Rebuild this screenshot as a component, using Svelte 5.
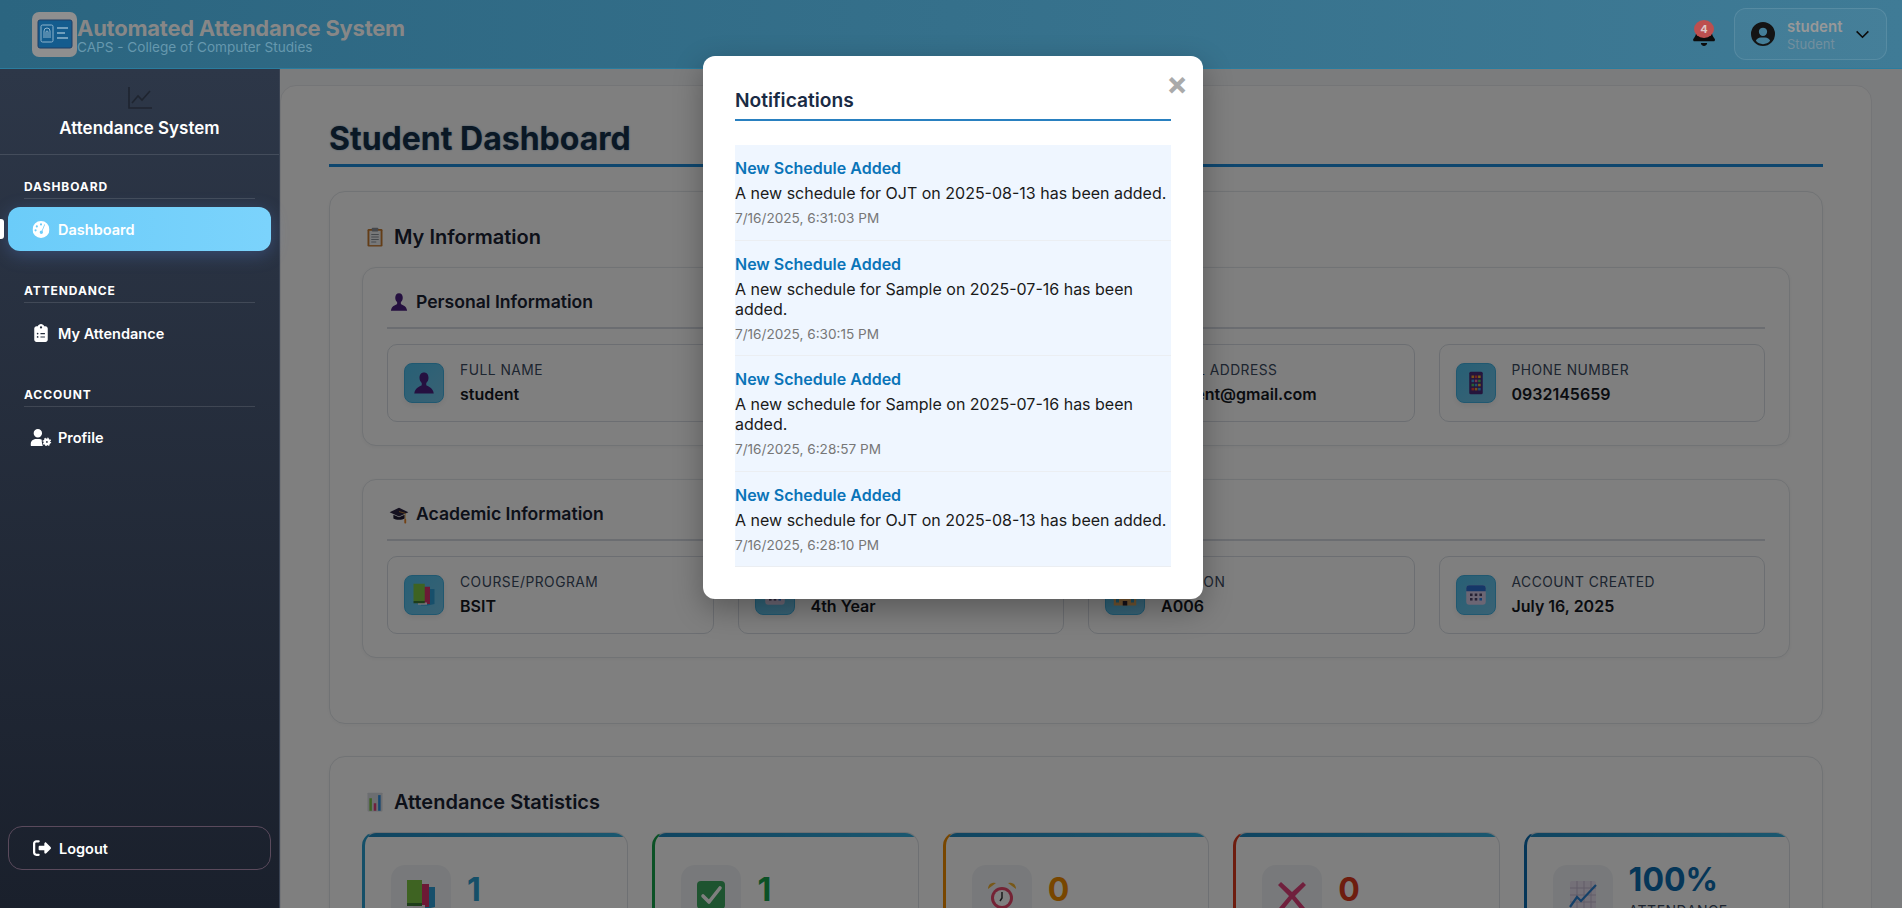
<script>
  let personal = [
    { icon: "bust", label: "Full Name", value: "student" },
    { icon: "id", label: "Student ID", value: "2022-0001" },
    { icon: "mail", label: "Email Address", value: "student@gmail.com" },
    { icon: "phone", label: "Phone Number", value: "0932145659" },
  ];
  let academic = [
    { icon: "books", label: "Course/Program", value: "BSIT" },
    { icon: "tear", label: "Year Level", value: "4th Year" },
    { icon: "school", label: "Section", value: "A006" },
    { icon: "cal", label: "Account Created", value: "July 16, 2025" },
  ];
  let stats = [
    { icon: "books", value: "1", label: "Total Classes", color: "#2a9fd0" },
    { icon: "check", value: "1", label: "Present", color: "#16a34a" },
    { icon: "clock", value: "0", label: "Late", color: "#f08c00" },
    { icon: "cross", value: "0", label: "Absent", color: "#dc3a1e" },
    { icon: "chart", value: "100%", label: "Attendance Rate", color: "#0a6cb0" },
  ];
  let notes = [
    { text: "A new schedule for OJT on 2025-08-13 has been added.", time: "7/16/2025, 6:31:03 PM" },
    { text: "A new schedule for Sample on 2025-07-16 has been added.", time: "7/16/2025, 6:30:15 PM" },
    { text: "A new schedule for Sample on 2025-07-16 has been added.", time: "7/16/2025, 6:28:57 PM" },
    { text: "A new schedule for OJT on 2025-08-13 has been added.", time: "7/16/2025, 6:28:10 PM" },
  ];
</script>

{#snippet emoji(name)}
  <svg class="emoji" viewBox="0 0 32 32" aria-hidden="true">
    {#if name === "clip"}
      <rect x="4" y="3" width="24" height="28" rx="2" fill="#c77a2e" />
      <rect x="7" y="6" width="18" height="23" fill="#eef0f2" />
      <rect x="11" y="1" width="10" height="6" rx="1" fill="#8a8f96" />
      <path d="M10 12h12M10 16h12M10 20h12M10 24h8" stroke="#8b929b" stroke-width="1.6" />
    {:else if name === "bust"}
      <path d="M16 2c4 0 6 3 6 7 0 3-1 5-3 7v3c3 2 9 3 10 11H3c1-8 7-9 10-11v-3c-2-2-3-4-3-7 0-4 2-7 6-7z" fill="#4a2080" />
    {:else if name === "cap"}
      <path d="M16 6 31 13 16 20 1 13z" fill="#2a2340" />
      <path d="M7 17v6c4 3 14 3 18 0v-6l-9 4z" fill="#1d1830" />
      <path d="M16 12 26 15v10" stroke="#e8a33a" stroke-width="1.2" fill="none" />
      <rect x="24.5" y="24" width="3" height="7" rx="1" fill="#e8852a" />
    {:else if name === "phone"}
      <rect x="7" y="1" width="18" height="30" rx="2" fill="#4a2a78" />
      <rect x="10" y="6" width="3.4" height="3.4" fill="#f0a030" />
      <rect x="14.4" y="6" width="3.4" height="3.4" fill="#e8483a" />
      <rect x="18.8" y="6" width="3.4" height="3.4" fill="#f0c030" />
      <rect x="10" y="11.5" width="3.4" height="3.4" fill="#40a0e0" />
      <rect x="14.4" y="11.5" width="3.4" height="3.4" fill="#e870a0" />
      <rect x="18.8" y="11.5" width="3.4" height="3.4" fill="#50c060" />
      <rect x="10" y="17" width="3.4" height="3.4" fill="#50c060" />
      <rect x="14.4" y="17" width="3.4" height="3.4" fill="#40a0e0" />
      <rect x="18.8" y="17" width="3.4" height="3.4" fill="#f0c030" />
      <rect x="10" y="22.5" width="3.4" height="3.4" fill="#e8483a" />
      <rect x="14.4" y="22.5" width="3.4" height="3.4" fill="#f0a030" />
      <rect x="18.8" y="22.5" width="3.4" height="3.4" fill="#40a0e0" />
    {:else if name === "books"}
      <path d="M12 8h18v20l-9 2h-9z" fill="#2f9fd6" />
      <rect x="10" y="5" width="14" height="23" fill="#d8326a" />
      <rect x="8" y="26" width="12" height="3" fill="#f0e8f0" />
      <rect x="2" y="1" width="15" height="23" fill="#7cc644" />
      <rect x="2" y="24" width="15" height="3" fill="#3d7a34" />
    {:else if name === "tear" || name === "cal"}
      <rect x="3" y="3" width="26" height="26" rx="4" fill="#d8cce8" />
      <path d="M3 11V7a4 4 0 0 1 4-4h18a4 4 0 0 1 4 4v4z" fill={name === "cal" ? "#2a6fd0" : "#b89ad8"} />
      <g fill="#4c4468">
        <rect x="8" y="14" width="3.4" height="3.4" /><rect x="14.3" y="14" width="3.4" height="3.4" /><rect x="20.6" y="14" width="3.4" height="3.4" />
        <rect x="8" y="20" width="3.4" height="3.4" /><rect x="14.3" y="20" width="3.4" height="3.4" />
      </g>
      <rect x="20.6" y="20" width="3.4" height="3.4" fill="#2a7fe0" />
    {:else if name === "school"}
      <rect x="1" y="12" width="30" height="18" fill="#e2a860" />
      <rect x="4" y="20" width="4" height="6" fill="#3a9ac0" />
      <rect x="24" y="20" width="4" height="6" fill="#3a9ac0" />
      <rect x="13" y="24" width="6" height="6" fill="#2a2030" />
      <path d="M2 12 16 5l14 7z" fill="#c0392b" />
    {:else if name === "id" || name === "mail"}
      <rect x="3" y="7" width="26" height="18" rx="2" fill="#e8eef4" />
      <path d="M3 8l13 10L29 8" stroke="#8aa" stroke-width="1.6" fill="none" />
    {:else if name === "check"}
      <rect x="2" y="2" width="28" height="28" rx="4" fill="#3ca860" />
      <path d="M8 17l6 6 11-14" stroke="#fff" stroke-width="3.6" fill="none" stroke-linecap="round" stroke-linejoin="round" />
    {:else if name === "clock"}
      <circle cx="16" cy="19" r="11" fill="#e8466a" />
      <circle cx="16" cy="19" r="8" fill="#fff" />
      <path d="M16 13v6l-2 3" stroke="#333" stroke-width="1.5" fill="none" />
      <path d="M2 10a6 6 0 0 1 8-6zM30 10a6 6 0 0 0-8-6z" fill="#f0b030" />
    {:else if name === "cross"}
      <path d="M5 3 16 13 27 3l3 3-11 11 10 12-4 2-9-11-9 11-4-2 10-12L2 6z" fill="#e0407a" />
    {:else if name === "chart"}
      <rect x="3" y="2" width="26" height="28" rx="2" fill="#e8e0f0" />
      <path d="M3 9h26M3 16h26M3 23h26M10 2v28M17 2v28M24 2v28" stroke="#c4b8d0" stroke-width="1" />
      <path d="M3 28l7-10 4 4L29 6" stroke="#2a80d0" stroke-width="2.2" fill="none" />
    {:else if name === "bars"}
      <rect x="4" y="1" width="24" height="30" rx="1" fill="#d8dce2" />
      <rect x="7" y="10" width="4" height="20" fill="#7cc644" />
      <rect x="14" y="18" width="4" height="12" fill="#e0407a" />
      <rect x="21" y="5" width="4" height="25" fill="#2f8fe0" />
    {/if}
  </svg>
{/snippet}

{#snippet field(item)}
  <div class="field">
    <div class="field-icon">{@render emoji(item.icon)}</div>
    <div>
      <div class="field-label">{item.label}</div>
      <div class="field-value">{item.value}</div>
    </div>
  </div>
{/snippet}

<div class="page">
  <header class="topbar">
    <div class="brand">
      <div class="logo">
        <svg viewBox="0 0 36 30" width="36" height="30" aria-hidden="true">
          <rect x="1" y="1" width="34" height="28" rx="2" fill="#145c8e" stroke="#1f3f66" />
          <rect x="4" y="6" width="12" height="17" rx="1.5" fill="none" stroke="#8fb4cc" stroke-width="1" />
          <path d="M7 19v-7a3 3 0 0 1 6 0v7M9 19v-6a1 1 0 0 1 2 0v6" fill="none" stroke="#8fb4cc" stroke-width="1" />
          <path d="M20 9h11M20 14h8M20 19h11" stroke="#8fb4cc" stroke-width="1.6" />
        </svg>
      </div>
      <div class="brand-text">
        <div class="brand-title">Automated Attendance System</div>
        <div class="brand-sub">CAPS - College of Computer Studies</div>
      </div>
    </div>
    <div class="top-right">
      <div class="bell">
        <svg viewBox="0 0 448 512" width="22" height="25" aria-hidden="true">
          <path fill="#0c0c0c" d="M224 0c-18 0-32 14-32 32v19C119 66 64 131 64 208v19c0 47-17 92-48 127l-7 8c-8 10-10 23-5 35s16 19 29 19h384c13 0 24-8 29-19s3-25-5-35l-7-8c-31-35-48-80-48-127v-19c0-77-55-142-128-157V32c0-18-14-32-32-32zm45 493c12-12 19-28 19-45H160c0 17 7 33 19 45s28 19 45 19 33-7 45-19z" />
        </svg>
        <span class="badge">4</span>
      </div>
      <div class="user">
        <svg viewBox="0 0 512 512" width="24" height="24" aria-hidden="true">
          <path fill="#141414" d="M256 0a256 256 0 1 0 0 512 256 256 0 0 0 0-512zm0 120a88 88 0 1 1 0 176 88 88 0 0 1 0-176zm0 352c-61 0-116-27-153-71 16-45 59-73 105-73h96c46 0 89 28 105 73-37 44-92 71-153 71z" />
        </svg>
        <div class="user-text">
          <div class="user-name">student</div>
          <div class="user-role">Student</div>
        </div>
        <svg viewBox="0 0 16 10" width="15" height="9" aria-hidden="true">
          <path d="M1.5 1.5 8 8l6.5-6.5" fill="none" stroke="#0c0c0c" stroke-width="1.8" />
        </svg>
      </div>
    </div>
  </header>

  <div class="body">
    <aside class="sidebar">
      <div class="side-head">
        <svg viewBox="0 0 24 22" width="24" height="22" aria-hidden="true">
          <path d="M1 0v21h23" fill="none" stroke="#1f2530" stroke-width="1.6" />
          <path d="M4 16l6-7 4 4 8-9" fill="none" stroke="#1f2530" stroke-width="1.6" />
        </svg>
        <div class="side-title">Attendance System</div>
      </div>
      <nav class="side-nav">
        <div class="side-group">
          <div class="side-label">Dashboard</div>
          <div class="side-item active">
            <svg viewBox="0 0 512 512" width="17" height="17" aria-hidden="true">
              <path fill="#fff" fill-rule="evenodd" d="M0 256a256 256 0 1 1 512 0A256 256 0 0 1 0 256zM256 70a32 32 0 1 0 0 64 32 32 0 0 0 0-64zM130 130a32 32 0 1 0 0 64 32 32 0 0 0 0-64zM92 250a32 32 0 1 0 0 64 32 32 0 0 0 0-64zM352 110l-72 180c-30-6-62 16-62 52 0 24 18 50 48 50s50-24 50-50c0-16-6-30-16-40l72-180c8-24-10-30-20-12z" />
            </svg>
            <span>Dashboard</span>
          </div>
        </div>
        <div class="side-group">
          <div class="side-label">Attendance</div>
          <div class="side-item">
            <svg viewBox="0 0 384 512" width="14" height="18" aria-hidden="true">
              <path fill="#fff" fill-rule="evenodd" d="M192 0c-42 0-77 27-91 64H64C29 64 0 93 0 128v320c0 35 29 64 64 64h256c35 0 64-29 64-64V128c0-35-29-64-64-64h-37C269 27 234 0 192 0zm0 64a32 32 0 1 1 0 64 32 32 0 0 1 0-64zM72 272a24 24 0 1 1 48 0 24 24 0 0 1-48 0zm104-16h128v32H176zM72 368a24 24 0 1 1 48 0 24 24 0 0 1-48 0zm104-16h128v32H176z" />
            </svg>
            <span>My Attendance</span>
          </div>
        </div>
        <div class="side-group">
          <div class="side-label">Account</div>
          <div class="side-item">
            <svg viewBox="0 0 640 512" width="21" height="17" aria-hidden="true">
              <path fill="#fff" d="M224 0a128 128 0 1 1 0 256A128 128 0 0 1 224 0zm-45 304h90c28 0 54 8 76 22-8 40 0 90 30 186H30c-17 0-30-13-30-30 0-106 67-178 179-178z" />
              <circle cx="500" cy="390" r="66" fill="none" stroke="#fff" stroke-width="76" />
              <circle cx="500" cy="390" r="116" fill="none" stroke="#fff" stroke-width="34" stroke-dasharray="44 47" />
            </svg>
            <span>Profile</span>
          </div>
        </div>
      </nav>
      <div class="logout">
        <svg viewBox="0 0 512 512" width="18" height="18" aria-hidden="true">
          <path fill="#fff" d="M160 96c18 0 32-14 32-32s-14-32-32-32H96C43 32 0 75 0 128v256c0 53 43 96 96 96h64c18 0 32-14 32-32s-14-32-32-32H96c-18 0-32-14-32-32V128c0-18 14-32 32-32zm345 137L377 105c-9-9-23-12-35-7s-20 17-20 30v64H192c-18 0-32 14-32 32v64c0 18 14 32 32 32h130v64c0 13 8 25 20 30s26 2 35-7l128-128c9-9 9-25 0-34z" />
        </svg>
        <span>Logout</span>
      </div>
    </aside>

    <main class="main">
      <div class="shell">
        <h1>Student Dashboard</h1>

        <section class="panel">
          <h2>{@render emoji("clip")} My Information</h2>
          <div class="sub-panel">
            <h3>{@render emoji("bust")} Personal Information</h3>
            <div class="fields">
              {#each personal as item}
                {@render field(item)}
              {/each}
            </div>
          </div>
          <div class="sub-panel">
            <h3>{@render emoji("cap")} Academic Information</h3>
            <div class="fields">
              {#each academic as item}
                {@render field(item)}
              {/each}
            </div>
          </div>
        </section>

        <section class="panel">
          <h2>{@render emoji("bars")} Attendance Statistics</h2>
          <div class="stats">
            {#each stats as s}
              <div class="stat" style="border-left-color: {s.color}">
                <div class="stat-icon">{@render emoji(s.icon)}</div>
                <div class="stat-text">
                  <div class="stat-value" style="color: {s.color}">{s.value}</div>
                  <div class="stat-label">{s.label}</div>
                </div>
              </div>
            {/each}
          </div>
        </section>
      </div>
    </main>
  </div>

  <div class="overlay">
    <div class="modal">
      <span class="close">×</span>
      <h2 class="modal-title">Notifications</h2>
      <ul class="notes">
        {#each notes as n}
          <li>
            <div class="note-title">New Schedule Added</div>
            <div class="note-text">{n.text}</div>
            <div class="note-time">{n.time}</div>
          </li>
        {/each}
      </ul>
    </div>
  </div>
</div>

<style>
  :global(body) {
    margin: 0;
    font-family: Inter, "Noto Sans", sans-serif;
    background: #fff;
  }
  .page {
    height: 908px;
    overflow: hidden;
    position: relative;
    display: flex;
    flex-direction: column;
  }
  .topbar {
    flex: none;
    height: 69px;
    box-sizing: border-box;
    padding: 0 15px 0 32px;
    position: relative;
    z-index: 4;
    display: flex;
    align-items: center;
    justify-content: space-between;
    background: linear-gradient(90deg, #2b6580, #3f7b96);
    border-bottom: 1px solid #2a7c9e;
  }
  .brand {
    display: flex;
    align-items: center;
  }
  .logo {
    width: 45px;
    height: 45px;
    border-radius: 7px;
    background: #8f8f8f;
    display: flex;
    align-items: center;
    justify-content: center;
  }
  .brand-text {
    padding-top: 1px;
  }
  .brand-title {
    font-size: 22px;
    font-weight: 700;
    line-height: 24px;
    color: #878787;
    letter-spacing: -0.25px;
  }
  .brand-sub {
    font-size: 13.6px;
    line-height: 14px;
    color: #6698ae;
  }
  .top-right {
    display: flex;
    align-items: center;
    gap: 19px;
  }
  .bell {
    position: relative;
    height: 25px;
    margin-bottom: 1px;
  }
  .badge {
    position: absolute;
    top: -1px;
    left: 1px;
    width: 20px;
    height: 18px;
    border-radius: 50%;
    background: #bd4f4f;
    color: #ddc8c8;
    font-size: 11px;
    font-weight: 700;
    text-align: center;
    line-height: 18px;
  }
  .user {
    width: 153px;
    height: 52px;
    box-sizing: border-box;
    padding: 0 16px;
    display: flex;
    align-items: center;
    gap: 12px;
    border-radius: 12px;
    border: 1px solid rgba(255, 255, 255, 0.1);
    background: rgba(255, 255, 255, 0.03);
  }
  .user-text {
    flex: 1;
    padding-top: 2px;
  }
  .user-name {
    font-size: 15px;
    font-weight: 600;
    line-height: 18px;
    color: #989898;
  }
  .user-role {
    font-size: 13px;
    line-height: 17px;
    color: #728f9e;
  }
  .body {
    flex: 1;
    min-height: 0;
    display: flex;
  }
  .sidebar {
    flex: none;
    width: 280px;
    box-sizing: border-box;
    position: relative;
    z-index: 5;
    display: flex;
    flex-direction: column;
    background: linear-gradient(180deg, #2d3748, #1a202c);
    border-right: 1px solid #3a4353;
    padding-bottom: 38px;
  }
  .side-head {
    height: 86px;
    box-sizing: border-box;
    padding-top: 18px;
    display: flex;
    flex-direction: column;
    align-items: center;
    border-bottom: 1px solid rgba(255, 255, 255, 0.12);
  }
  .side-title {
    margin-top: 8px;
    font-size: 17px;
    font-weight: 600;
    line-height: 22px;
    color: #fff;
  }
  .side-nav {
    flex: 1;
    padding-top: 24px;
  }
  .side-group {
    margin-bottom: 32px;
  }
  .side-label {
    margin: 0 24px 8px;
    padding-bottom: 3px;
    font-size: 12px;
    font-weight: 700;
    line-height: 16px;
    letter-spacing: 0.9px;
    text-transform: uppercase;
    color: #fff;
    border-bottom: 1px solid rgba(255, 255, 255, 0.12);
  }
  .side-item {
    height: 44px;
    margin: 0 8px;
    padding-left: 24px;
    position: relative;
    display: flex;
    align-items: center;
    border-radius: 12px;
    font-size: 14.5px;
    font-weight: 600;
    color: #fff;
  }
  .side-item svg {
    position: absolute;
    left: 33px;
    transform: translateX(-50%);
  }
  .side-item span {
    margin-left: 26px;
  }
  .side-item.active {
    background: linear-gradient(90deg, #6bccf9, #7bd3fc);
    box-shadow: 0 4px 18px rgba(96, 140, 230, 0.3);
  }
  .side-item.active::before {
    content: "";
    position: absolute;
    left: -8px;
    top: 12px;
    width: 4px;
    height: 20px;
    background: #fff;
    border-radius: 0 3px 3px 0;
  }
  .logout {
    height: 44px;
    box-sizing: border-box;
    margin: 0 8px;
    padding-left: 24px;
    display: flex;
    align-items: center;
    gap: 8px;
    border-radius: 14px;
    border: 1px solid #5a4a5c;
    font-size: 14.5px;
    font-weight: 600;
    color: #fff;
  }
  .main {
    flex: 1;
    min-width: 0;
    background: #f7f8fa;
    padding: 16px 30px 0 0;
  }
  .shell {
    box-sizing: border-box;
    padding: 0 48px 32px;
    border-radius: 16px;
    border: 1px solid #e8eaee;
    background: #fff;
  }
  h1 {
    margin: 0 0 24px;
    padding: 33px 0 5px;
    font-size: 32px;
    line-height: 40px;
    font-weight: 700;
    color: #14304a;
    text-shadow: 0 0 2px rgba(20, 90, 150, 0.5);
    border-bottom: 3px solid #1c8cdc;
  }
  .panel {
    padding: 31px 32px 32px;
    margin-bottom: 32px;
    border-radius: 16px;
    border: 1px solid #e2e6ea;
    background: #fff;
    box-shadow: 0 1px 4px rgba(0, 0, 0, 0.04);
  }
  h2 {
    margin: 0 0 16px 3px;
    display: flex;
    align-items: center;
    gap: 9px;
    font-size: 20px;
    line-height: 28px;
    font-weight: 600;
    color: #1a2233;
  }
  h2 .emoji {
    width: 20px;
    height: 20px;
  }
  .sub-panel {
    padding: 22px 24px 23px;
    margin-bottom: 33px;
    border-radius: 14px;
    border: 1px solid #e2e6ea;
    background: #fff;
    box-shadow: 0 1px 4px rgba(0, 0, 0, 0.05);
  }
  .sub-panel h3 {
    margin: 0 0 15px;
    padding-bottom: 13px;
    height: 24px;
    display: flex;
    align-items: center;
    gap: 7px;
    font-size: 17.6px;
    line-height: 24px;
    font-weight: 600;
    color: #1a2233;
    border-bottom: 2px solid #d6dbe3;
  }
  h3 .emoji {
    width: 20px;
    height: 20px;
    margin-left: 2px;
  }
  .fields {
    display: grid;
    grid-template-columns: repeat(4, 1fr);
    gap: 24px;
  }
  .field {
    height: 78px;
    box-sizing: border-box;
    padding: 0 16px;
    display: flex;
    align-items: center;
    gap: 16px;
    border-radius: 10px;
    border: 1px solid #d8dde4;
    background: #fff;
  }
  .field-icon {
    flex: none;
    width: 40px;
    height: 40px;
    border-radius: 8px;
    display: flex;
    align-items: center;
    justify-content: center;
    background: linear-gradient(135deg, #4fc0ec, #74c4e8);
    border: 1px solid #40b0e0;
    box-sizing: border-box;
    box-shadow: 0 2px 6px rgba(0, 0, 0, 0.08);
  }
  .field-icon .emoji {
    width: 24px;
    height: 24px;
  }
  .field-label {
    margin-bottom: 2px;
    font-size: 13.8px;
    line-height: 20px;
    letter-spacing: 0.5px;
    text-transform: uppercase;
    color: #3a4a60;
  }
  .field-value {
    font-size: 16px;
    line-height: 24px;
    font-weight: 600;
    color: #14181f;
  }
  .stats {
    display: grid;
    grid-template-columns: repeat(5, 1fr);
    gap: 24px;
  }
  .stat {
    position: relative;
    overflow: hidden;
    box-sizing: border-box;
    padding: 17px 26px;
    display: flex;
    align-items: center;
    gap: 16px;
    border-radius: 14px;
    border: 1px solid #dde1e6;
    border-left: 3px solid;
    background: #fff;
  }
  .stat::before {
    content: "";
    position: absolute;
    left: 0;
    right: 0;
    top: 0;
    height: 4px;
    background: linear-gradient(90deg, #1e88c0, #36b0e0);
  }
  .stat-icon {
    flex: none;
    width: 60px;
    height: 60px;
    border-radius: 14px;
    background: #f1f3f6;
    display: flex;
    align-items: center;
    justify-content: center;
  }
  .stat-icon .emoji {
    width: 32px;
    height: 32px;
  }
  .stat-text {
    padding-top: 8px;
  }
  .stat-value {
    font-size: 32px;
    line-height: 43px;
    font-weight: 700;
  }
  .stat-label {
    font-size: 14px;
    line-height: 19px;
    letter-spacing: 0.5px;
    text-transform: uppercase;
    color: #3a4a60;
  }
  .overlay {
    position: absolute;
    inset: 0;
    background: rgba(0, 0, 0, 0.5);
    display: flex;
    justify-content: center;
    align-items: flex-start;
    padding: 56px 0 0 4px;
    box-sizing: border-box;
  }
  .modal {
    position: relative;
    z-index: 6;
    width: 500px;
    box-sizing: border-box;
    padding: 32px;
    border-radius: 12px;
    background: #fff;
    box-shadow: 0 10px 30px rgba(0, 0, 0, 0.3);
  }
  .close {
    position: absolute;
    top: 7px;
    right: 15px;
    font-size: 32px;
    font-weight: 700;
    line-height: 42px;
    color: #aaa;
  }
  .modal-title {
    margin: 0 0 24px;
    display: block;
    height: 31px;
    font-size: 19.2px;
    line-height: 24px;
    font-weight: 600;
    color: #1a2b44;
    border-bottom: 2px solid #2980c0;
  }
  .notes {
    list-style: none;
    margin: 0;
    padding: 0;
    background: #eff6ff;
  }
  .notes li {
    padding: 12px 0 11.5px;
    border-bottom: 1px solid #ebeef2;
  }
  .note-title {
    font-size: 16px;
    font-weight: 600;
    line-height: 22px;
    color: #0a74b8;
  }
  .note-text {
    margin-top: 4px;
    font-size: 16px;
    line-height: 20px;
    color: #1a1a1a;
  }
  .note-time {
    margin-top: 5px;
    font-size: 13.6px;
    line-height: 20px;
    color: #777;
  }
</style>
